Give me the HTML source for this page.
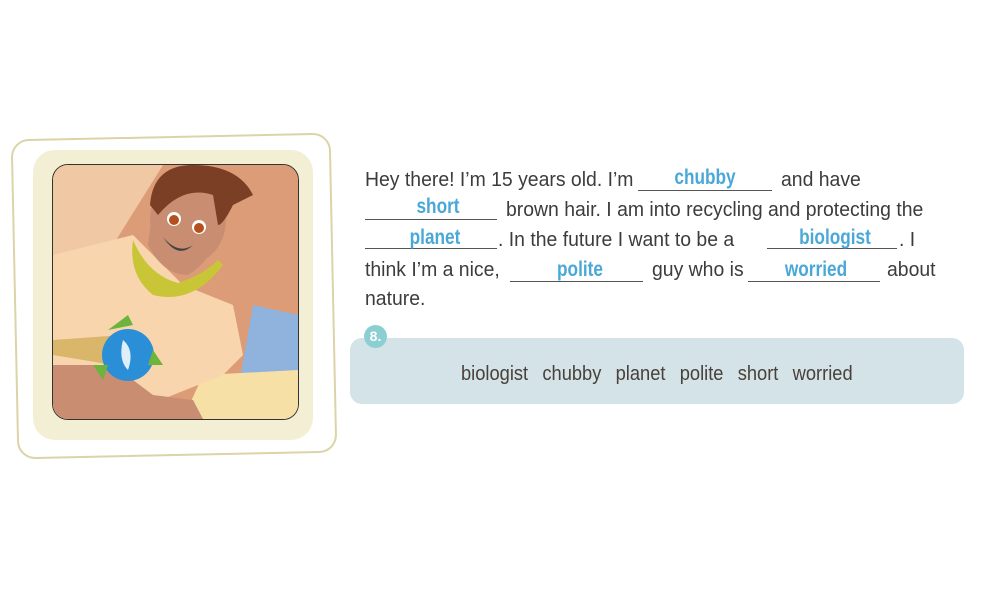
<!DOCTYPE html>
<html><head><meta charset="utf-8"><style>
body{margin:0;width:1000px;height:600px;background:#fff;position:relative;overflow:hidden;font-family:"Liberation Sans Narrow","Liberation Sans",sans-serif}
.t{position:absolute;font-size:20px;color:#3c3c3c;white-space:nowrap;line-height:24px;transform-origin:left center;transform:scaleX(0.97)}
.b{position:absolute;height:1px;background:#555}
.a{position:absolute;font-size:21px;font-weight:bold;color:#4aa8d8;line-height:24px;text-align:center;transform:scaleX(0.82)}
</style></head><body>
<div style="position:absolute;left:14px;top:136px;width:316px;height:316px;border:2px solid #ddd3a8;border-radius:18px;background:#fff;transform:rotate(-1.2deg)"></div>
<div style="position:absolute;left:33px;top:150px;width:280px;height:290px;border-radius:22px;background:#f3efd4"></div>
<div style="position:absolute;left:52px;top:164px;width:245px;height:254px;border:1.5px solid #333;border-radius:16px;overflow:hidden;background:#e2a07c">
<svg width="245" height="254" viewBox="0 0 245 254">
<rect width="245" height="254" fill="#dc9c78"/>
<polygon points="0,0 110,0 60,80 0,90" fill="#f0c9a4"/>
<polygon points="200,140 245,150 245,254 180,254" fill="#8fb3dc"/>
<polygon points="150,210 245,205 245,254 130,254" fill="#f7e0a6"/>
<path d="M0,90 L80,70 L130,120 L180,140 L190,190 L170,210 L120,230 L60,254 L0,254Z" fill="#f9d5ad"/>
<path d="M0,200 L60,200 L100,230 L140,235 L150,254 L0,254Z" fill="#c98e72"/>
<path d="M0,175 L70,170 L60,200 L0,190Z" fill="#d9b66a"/>
<path d="M80,75 Q95,110 125,118 Q150,110 165,95 L170,100 Q140,140 100,130 Q75,110 80,75Z" fill="#c8c637"/>
<path d="M95,80 Q110,110 135,110 Q160,95 160,70 L150,40 L100,40Z" fill="#c98e72"/>
<ellipse cx="135" cy="55" rx="38" ry="44" fill="#c98e72"/>
<path d="M97,40 Q100,0 140,0 Q185,0 200,30 L180,40 Q170,60 165,60 L160,30 Q130,20 105,50Z" fill="#7a3f24"/>
<circle cx="121" cy="54" r="7" fill="#fff"/><circle cx="121" cy="55" r="5" fill="#b3501e"/>
<circle cx="146" cy="62" r="7" fill="#fff"/><circle cx="146" cy="63" r="5" fill="#b3501e"/>
<path d="M110,72 Q125,90 140,80 Q125,95 110,72Z" fill="#444"/>
<circle cx="75" cy="190" r="26" fill="#2b8fd8"/><path d="M70,175 Q82,185 75,205 Q65,195 70,175Z" fill="#dfeffa"/>
<path d="M55,165 L75,150 L80,160Z" fill="#6cb43c"/><path d="M100,185 L110,200 L95,200Z" fill="#6cb43c"/><path d="M40,200 L50,215 L55,200Z" fill="#6cb43c"/>
</svg></div>
<div class="t" style="left:365px;top:168px">Hey there! I’m 15 years old. I’m</div>
<div class="b" style="left:638px;top:190px;width:134px"></div>
<div class="a" style="left:638px;top:166px;width:134px">chubby</div>
<div class="t" style="left:781px;top:168px">and have</div>

<div class="b" style="left:365px;top:219px;width:132px"></div>
<div class="a" style="left:365px;top:195px;width:146px">short</div>
<div class="t" style="left:506px;top:198px">brown hair. I am into recycling and protecting the</div>

<div class="b" style="left:365px;top:248px;width:132px"></div>
<div class="a" style="left:365px;top:226px;width:140px">planet</div>
<div class="t" style="left:498px;top:228px">. In the future I want to be a</div>
<div class="b" style="left:767px;top:248px;width:130px"></div>
<div class="a" style="left:767px;top:226px;width:136px">biologist</div>
<div class="t" style="left:899px;top:228px">. I</div>

<div class="t" style="left:365px;top:258px">think I’m a nice,</div>
<div class="b" style="left:510px;top:281px;width:133px"></div>
<div class="a" style="left:510px;top:258px;width:140px">polite</div>
<div class="t" style="left:652px;top:258px">guy who is</div>
<div class="b" style="left:748px;top:281px;width:132px"></div>
<div class="a" style="left:748px;top:258px;width:136px">worried</div>
<div class="t" style="left:887px;top:258px">about</div>
<div class="t" style="left:365px;top:287px">nature.</div>

<div style="position:absolute;left:350px;top:338px;width:614px;height:66px;background:#d3e3e8;border-radius:12px"></div>
<div style="position:absolute;left:364px;top:325px;width:23px;height:23px;border-radius:50%;background:#8ccfd3;color:#fff;font:bold 14px 'Liberation Sans',sans-serif;text-align:center;line-height:23px">8.</div>
<div class="t" style="left:461px;top:362px;word-spacing:10px;color:#4a4038;transform:scaleX(0.915)">biologist chubby planet polite short worried</div>
</body></html>
